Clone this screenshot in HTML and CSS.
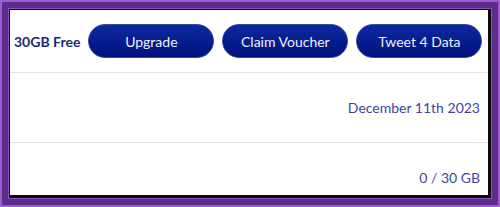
FILE: index.html
```html
<!DOCTYPE html>
<html lang="en">
<head>
    <meta charset="UTF-8">
    <meta name="viewport" content="width=device-width, initial-scale=1.0">
    <title>Data Plan</title>
    <link rel="stylesheet" href="styles.css">
</head>
<body>
    <div class="frame">
        <div class="frame-inner">
            <div class="card">
                <div class="top-row">
                    <span class="free">30GB Free</span>
                    <button class="pill">Upgrade</button>
                    <button class="pill">Claim Voucher</button>
                    <button class="pill">Tweet 4 Data</button>
                </div>
                <div class="row">December 11th 2023</div>
                <div class="row">0 / 30 GB</div>
            </div>
        </div>
    </div>
</body>
</html>
```

FILE: styles.css
```css
body {
    margin: 0;
    font-family: Lato, "Liberation Sans", sans-serif;
    background-color: #fff;
}
.frame {
    width: 500px;
    height: 207px;
    box-sizing: border-box;
    border: 2px solid #9d5bd4;
    background: #5c2d8a;
    padding: 6px;
}
.frame-inner {
    height: 100%;
    box-sizing: border-box;
    border: 1px solid #8d4ec6;
}
.card {
    height: 100%;
    box-sizing: border-box;
    background: #fff;
    border-style: solid;
    border-color: #0a0a0a;
    border-width: 1px 3px 3px 1px;
    overflow: hidden;
}
.top-row {
    display: flex;
    align-items: center;
    height: 62px;
    padding-left: 4px;
    gap: 8px;
    border-bottom: 1px solid #e4e4e4;
}
.free {
    font-weight: bold;
    font-size: 14px;
    color: #1b2878;
}
.pill {
    width: 126px;
    height: 34px;
    border-radius: 17px;
    border: 1px solid #3447a8;
    background: linear-gradient(#0c2a9e, #00117f);
    color: #f0f0f8;
    font-family: Lato, "Liberation Sans", sans-serif;
    font-size: 14px;
    cursor: pointer;
}
.row {
    display: flex;
    justify-content: flex-end;
    align-items: center;
    height: 69px;
    padding-right: 8px;
    border-bottom: 1px solid #e4e4e4;
    font-size: 14px;
    color: #43439e;
}
```
